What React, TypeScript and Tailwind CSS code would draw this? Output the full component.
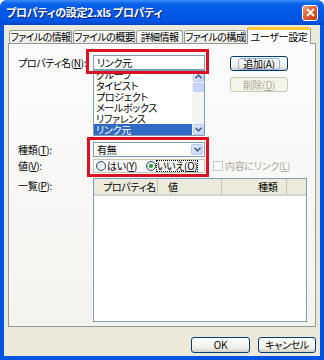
import React from "react"

const U = ({ c }: { c: string }) => <span className="underline">{c}</span>

const Chevron = ({ color = "#4d6185" }: { color?: string }) => (
  <svg width="7" height="5" viewBox="0 0 7 5">
    <path d="M0.5 0.8 L3.5 3.8 L6.5 0.8" fill="none" stroke={color} strokeWidth="1.6" />
  </svg>
)

const ChevronUp = () => (
  <svg width="7" height="5" viewBox="0 0 7 5">
    <path d="M0.5 4.2 L3.5 1.2 L6.5 4.2" fill="none" stroke="#4d6185" strokeWidth="1.6" />
  </svg>
)

const ArrowBtn = ({ up }: { up?: boolean }) => (
  <div className="w-[11px] h-[11px] flex items-center justify-center rounded-[2px] border border-[#b7caf5] bg-[linear-gradient(135deg,#e3ebff,#c1d3fb)]">
    {up ? <ChevronUp /> : <Chevron />}
  </div>
)

const Tab = ({ label, w }: { label: string; w: string }) => (
  <div
    className={`${w} h-[13px] ml-[1px] flex items-center justify-center whitespace-nowrap tracking-[-0.6px] rounded-t-[3px] border border-b-0 border-[#919b9c] bg-[linear-gradient(to_bottom,#ffffff,#ecebe6)]`}
  >
    {label}
  </div>
)

const XpButton = ({ children, disabled }: { children: React.ReactNode; disabled?: boolean }) => (
  <div
    className={
      disabled
        ? "w-[58px] h-[15px] flex items-center justify-center rounded-[3px] border border-[#c9c7ba] bg-[#f5f4ea] text-[#aca899]"
        : "w-[58px] h-[15px] flex items-center justify-center rounded-[3px] border border-[#003c74] bg-[linear-gradient(to_bottom,#ffffff,#f0f0ea_70%,#d6d0c5)]"
    }
  >
    {children}
  </div>
)

const Radio = ({ on }: { on?: boolean }) => (
  <div className="w-[10px] h-[10px] rounded-full border border-[#1c5180] bg-[linear-gradient(135deg,#dcdcd4,#ffffff)] flex items-center justify-center">
    {on && <div className="w-[4px] h-[4px] rounded-full bg-[#21a121]" />}
  </div>
)

export default function App() {
  const items = ["グループ", "タイピスト", "プロジェクト", "メールボックス", "リファレンス"]

  return (
    <div className="w-[324px] h-[360px] flex flex-col overflow-hidden rounded-t-[7px] bg-[#0054e3] text-[10px] leading-none text-black font-['Noto_Sans_CJK_JP',sans-serif] [font-feature-settings:'palt'] tracking-[-0.3px]">
      {/* title bar */}
      <div className="h-[25px] shrink-0 flex items-center justify-between pl-[6px] pr-[6px] bg-[linear-gradient(to_bottom,#3d8ef8_0%,#0a62ea_15%,#0058e6_50%,#0054e3_85%,#0146c6_100%)]">
        <span className="text-white font-bold text-[11px] [text-shadow:1px_1px_0_#0a1e6e]">
          プロパティの設定2.xls プロパティ
        </span>
        <div className="w-[16px] h-[16px] rounded-[3px] border border-white bg-[linear-gradient(135deg,#f0a080,#e0582a_50%,#c43c14)] flex items-center justify-center">
          <svg width="9" height="9" viewBox="0 0 9 9">
            <path d="M1 1 L8 8 M8 1 L1 8" stroke="white" strokeWidth="2" />
          </svg>
        </div>
      </div>

      {/* body */}
      <div className="flex-1 flex flex-col mx-[4px] mb-[4px] bg-[#ece9d8]">
        {/* tabs */}
        <div className="h-[18px] shrink-0 flex items-end pl-[4px] relative z-10">
          <Tab label="ファイルの情報" w="w-[63px]" />
          <Tab label="ファイルの概要" w="w-[62px]" />
          <Tab label="詳細情報" w="w-[47px]" />
          <Tab label="ファイルの構成" w="w-[62px]" />
          <div className="w-[64px] h-[17px] ml-[1px] -mb-[1px] flex items-center justify-center whitespace-nowrap rounded-t-[3px] border border-b-0 border-[#919b9c] border-t-[3px] border-t-[#ffc83c] bg-[#fcfcfe]">
            ユーザー設定
          </div>
        </div>

        {/* panel */}
        <div className="relative h-[284px] shrink-0 mx-[4px] border border-[#919b9c] bg-[linear-gradient(to_bottom,#fcfcfe,#f4f3ee)] pl-[9px] pt-[11px] flex flex-col">
          {/* name + list */}
          <div className="flex">
            <div className="w-[75px] h-[15px] flex items-center">
              プロパティ名(<U c="N" />):
            </div>
            <div className="w-[112px] flex flex-col">
              <div className="h-[15px] border border-[#7f9db9] bg-white flex items-center pl-[3px]">リンク元</div>
              <div className="h-[66px] border border-[#7f9db9] bg-white flex">
                <div className="flex-1 flex flex-col justify-end overflow-hidden">
                  {items.map((t) => (
                    <div key={t} className="h-[11px] shrink-0 flex items-center pl-[2px]">
                      {t}
                    </div>
                  ))}
                  <div className="h-[11px] shrink-0 flex items-center pl-[2px] bg-[#316ac5] text-white">リンク元</div>
                </div>
                <div className="w-[12px] flex flex-col bg-[#f4f4f0] pl-[1px]">
                  <ArrowBtn up />
                  <div className="h-[9px] mt-[1px] w-[11px] rounded-[2px] border border-[#b7caf5] bg-[#c8d6fa]" />
                  <div className="flex-1" />
                  <ArrowBtn />
                </div>
              </div>
            </div>
            <div className="pl-[25px] flex flex-col gap-[6px] pt-[1px]">
              <XpButton>
                <span className="rounded-[2px] outline outline-[1px] outline-[#97aee2] px-[4px]">
                  追加(<U c="A" />)
                </span>
              </XpButton>
              <XpButton disabled>
                削除(<U c="D" />)
              </XpButton>
            </div>
          </div>

          {/* type */}
          <div className="flex mt-[6px]">
            <div className="w-[75px] h-[15px] flex items-center">
              種類(<U c="T" />):
            </div>
            <div className="w-[112px] h-[15px] border border-[#7f9db9] bg-white flex items-center justify-between pl-[3px] pr-[1px]">
              有無
              <div className="w-[12px] h-[11px] flex items-center justify-center rounded-[2px] border border-[#b7caf5] bg-[linear-gradient(135deg,#e3ebff,#c1d3fb)]">
                <Chevron />
              </div>
            </div>
          </div>

          {/* value */}
          <div className="flex mt-[2px] items-center">
            <div className="w-[75px] h-[14px] flex items-center">
              値(<U c="V" />):
            </div>
            <div className="w-[112px] h-[14px] border border-[#c8c6b8] flex items-center pl-[2px]">
              <Radio />
              <span className="ml-[1px]">
                はい(<U c="Y" />)
              </span>
              <div className="ml-[9px]">
                <Radio on />
              </div>
              <span className="ml-[1px] outline outline-[1px] outline-dotted outline-black">
                いいえ(<U c="O" />)
              </span>
            </div>
            <div className="ml-[8px] w-[10px] h-[10px] border border-[#cac8bb] bg-white" />
            <span className="ml-[2px] text-[#aca899]">
              内容にリンク(<U c="L" />)
            </span>
          </div>

          {/* list view */}
          <div className="flex mt-[5px]">
            <div className="w-[75px] h-[15px] flex items-center">
              一覧(<U c="P" />):
            </div>
            <div className="w-[214px] h-[144px] border border-[#7f9db9] bg-white flex flex-col">
              <div className="h-[17px] flex border-b-2 border-[#d6d3ce] bg-[#ebeadb]">
                <div className="w-[64px] border-r border-[#c7c5b2] flex items-center pl-[9px]">プロパティ名</div>
                <div className="w-[64px] border-r border-[#c7c5b2] flex items-center pl-[10px]">値</div>
                <div className="w-[65px] border-r border-[#c7c5b2] flex items-center pl-[36px]">種類</div>
                <div className="flex-1" />
              </div>
            </div>
          </div>

          {/* red highlights */}
          <div className="absolute left-[77px] top-[5px] w-[123px] h-[25px] border-[3px] border-[#dc1020]" />
          <div className="absolute left-[78px] top-[93px] w-[122px] h-[40px] border-[3px] border-[#dc1020]" />
        </div>

        {/* bottom buttons */}
        <div className="flex-1 flex justify-end items-start gap-[8px] pt-[10px] pr-[4px]">
          <div className="w-[59px] h-[16px] flex items-center justify-center rounded-[3px] border border-[#003c74] bg-[linear-gradient(to_bottom,#ffffff,#f0f0ea_70%,#d6d0c5)]">
            OK
          </div>
          <div className="w-[58px] h-[16px] flex items-center justify-center rounded-[3px] border border-[#003c74] bg-[linear-gradient(to_bottom,#ffffff,#f0f0ea_70%,#d6d0c5)]">
            キャンセル
          </div>
        </div>
      </div>
    </div>
  )
}
